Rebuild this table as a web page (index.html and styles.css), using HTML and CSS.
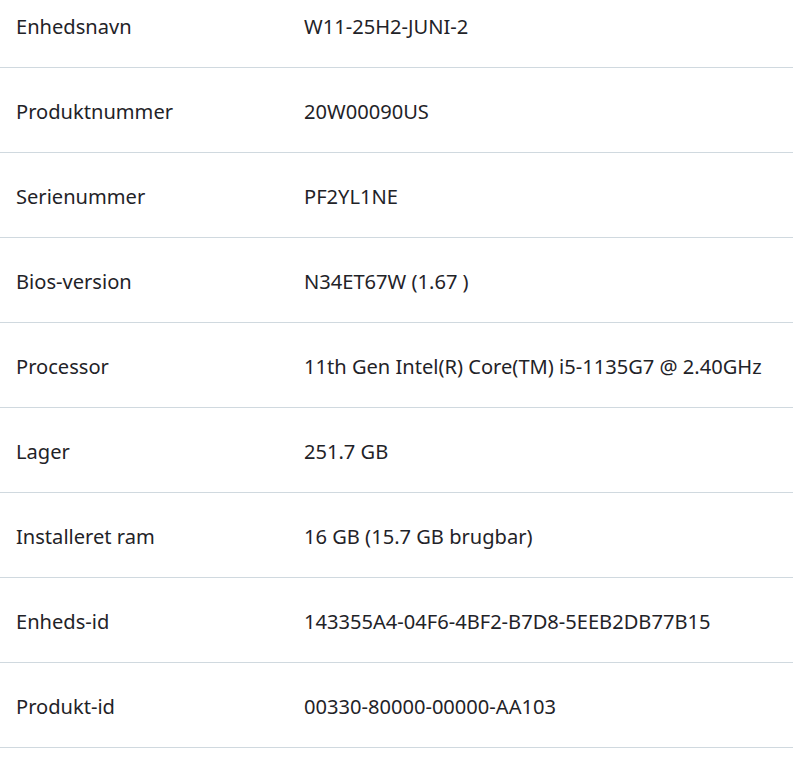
FILE: index.html
```html
<!DOCTYPE html>
<html lang="da">
<head>
    <meta charset="UTF-8">
    <meta name="viewport" content="width=device-width, initial-scale=1.0">
    <link rel="stylesheet" href="styles.css">
    <title>Enhedsspecifikationer</title>
</head>
<body>
  <div class="specs">
    <div class="row"><span class="label">Enhedsnavn</span><span class="value">W11-25H2-JUNI-2</span></div>
    <div class="row"><span class="label">Produktnummer</span><span class="value">20W00090US</span></div>
    <div class="row"><span class="label">Serienummer</span><span class="value">PF2YL1NE</span></div>
    <div class="row"><span class="label">Bios-version</span><span class="value">N34ET67W (1.67 )</span></div>
    <div class="row"><span class="label">Processor</span><span class="value">11th Gen Intel(R) Core(TM) i5-1135G7 @ 2.40GHz</span></div>
    <div class="row"><span class="label">Lager</span><span class="value">251.7 GB</span></div>
    <div class="row"><span class="label">Installeret ram</span><span class="value">16 GB (15.7 GB brugbar)</span></div>
    <div class="row"><span class="label">Enheds-id</span><span class="value">143355A4-04F6-4BF2-B7D8-5EEB2DB77B15</span></div>
    <div class="row"><span class="label">Produkt-id</span><span class="value">00330-80000-00000-AA103</span></div>
  </div>
</body>
</html>
```

FILE: styles.css
```css
body {
  margin: 0;
  background-color: #fff;
  font-family: "Noto Sans", "Open Sans", Arial, sans-serif;
  color: #1f2328;
  overflow: hidden;
}

.specs {
  margin-top: -17px;
}

.row {
  display: grid;
  grid-template-columns: 288px 1fr;
  align-items: center;
  box-sizing: border-box;
  height: 85px;
  padding: 3px 0 0 16px;
  border-bottom: 1px solid #d0d9df;
  font-size: 20.1px;
}
```
